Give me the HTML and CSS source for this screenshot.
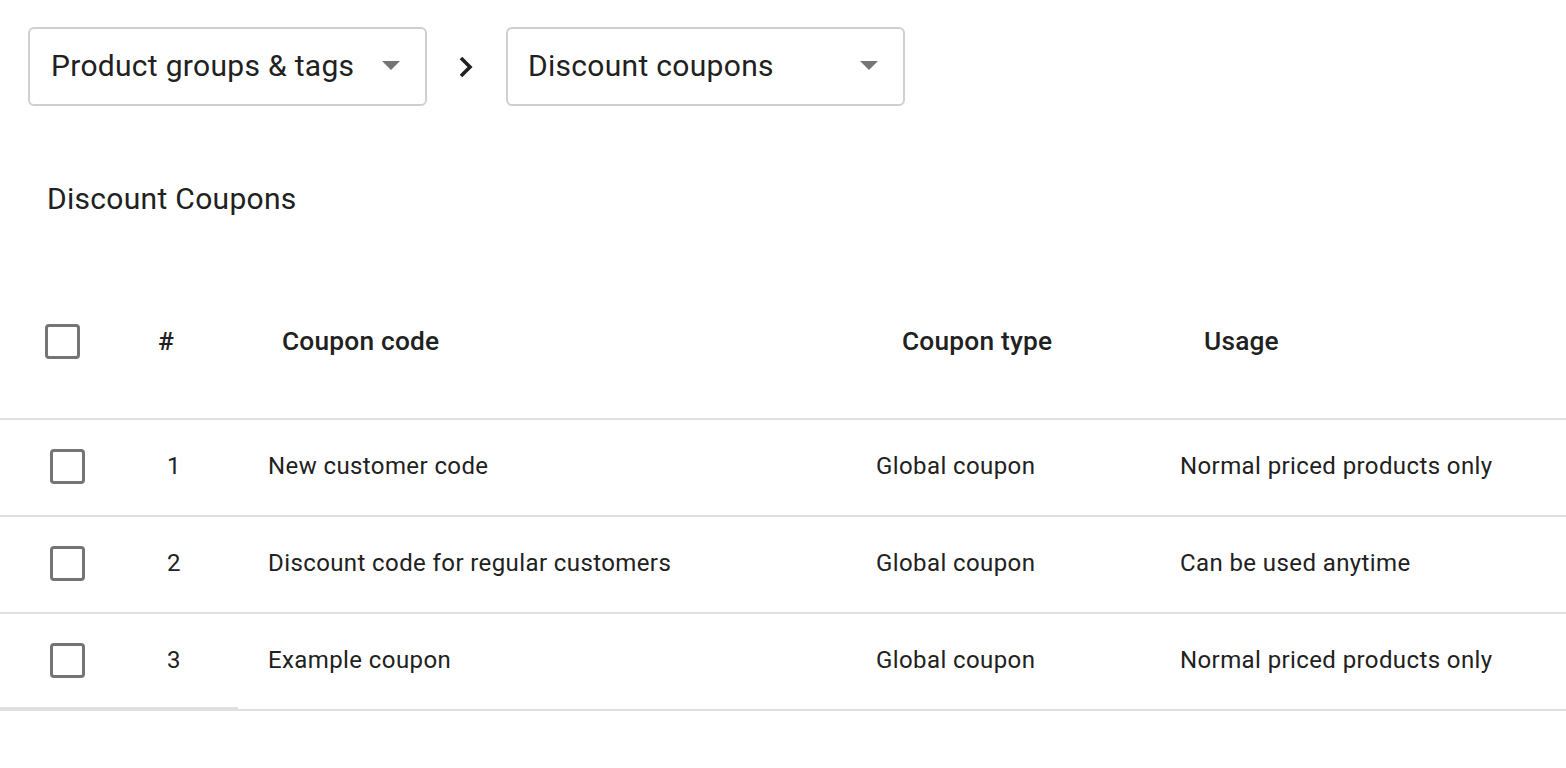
FILE: index.html
```html
<!DOCTYPE html>
<html>
<head>
<meta charset="utf-8">
<link rel="stylesheet" href="styles.css">
</head>
<body>
<div class="page">
  <div class="crumbs">
    <div class="select">
      <span class="select-label">Product groups &amp; tags</span>
      <span class="caret"></span>
    </div>
    <svg class="chev" width="16" height="24" viewBox="0 0 16 24"><path d="M3 3 L12 12 L3 21" fill="none" stroke="#212121" stroke-width="3.6"/></svg>
    <div class="select">
      <span class="select-label">Discount coupons</span>
      <span class="caret"></span>
    </div>
  </div>

  <h2 class="title">Discount Coupons</h2>

  <div class="table">
    <div class="thead">
      <div class="cell"><span class="box"></span></div>
      <div class="cell">#</div>
      <div class="cell">Coupon code</div>
      <div class="cell">Coupon type</div>
      <div class="cell">Usage</div>
    </div>
    <div class="tbody">
      <div class="row">
        <div class="cell"><span class="box"></span></div>
        <div class="cell num">1</div>
        <div class="cell">New customer code</div>
        <div class="cell">Global coupon</div>
        <div class="cell">Normal priced products only</div>
      </div>
      <div class="row">
        <div class="cell"><span class="box"></span></div>
        <div class="cell num">2</div>
        <div class="cell">Discount code for regular customers</div>
        <div class="cell">Global coupon</div>
        <div class="cell">Can be used anytime</div>
      </div>
      <div class="row">
        <div class="cell"><span class="box"></span></div>
        <div class="cell num">3</div>
        <div class="cell">Example coupon</div>
        <div class="cell">Global coupon</div>
        <div class="cell">Normal priced products only</div>
      </div>
      <div class="scroll-thumb"></div>
    </div>
  </div>
</div>
</body>
</html>
```

FILE: styles.css
```css
html, body {
  margin: 0;
  padding: 0;
  background: #ffffff;
}
body {
  font-family: Roboto, "Liberation Sans", sans-serif;
  color: #212121;
}
.page {
  padding-top: 27px;
}
.crumbs {
  display: flex;
  align-items: center;
  padding-left: 28px;
}
.select {
  box-sizing: border-box;
  width: 399px;
  height: 79px;
  border: 2px solid #cfcfcf;
  border-radius: 6px;
  display: flex;
  align-items: center;
  justify-content: space-between;
  padding: 0 25px 2px 21px;
}
.select-label {
  font-size: 30px;
  letter-spacing: 0.3px;
  color: #212121;
}
.caret {
  width: 0;
  height: 0;
  border-left: 9px solid transparent;
  border-right: 9px solid transparent;
  border-top: 9px solid #757575;
}
.chev {
  margin: 0 32px 0 31px;
}
.select + .chev + .select {
  padding-left: 20px;
}
.title {
  margin: 76px 0 0 47px;
  font-size: 30px;
  font-weight: 400;
  letter-spacing: 0.3px;
  line-height: 34px;
}
.table {
  margin-top: 91px;
}
.thead {
  display: grid;
  grid-template-columns: 113px 124px 620px 302px 1fr;
  height: 113px;
  align-items: center;
  border-bottom: 2px solid #e0e0e0;
  font-size: 26.3px;
  font-weight: 500;
  letter-spacing: 0.2px;
  padding-left: 45px;
  padding-bottom: 43px;
  box-sizing: border-box;
}
.tbody {
  position: relative;
}
.row {
  display: grid;
  grid-template-columns: 102px 116px 608px 304px 1fr;
  height: 97px;
  align-items: center;
  border-bottom: 2px solid #e0e0e0;
  font-size: 24px;
  letter-spacing: 0.4px;
  padding-left: 50px;
  padding-bottom: 3px;
  box-sizing: border-box;
}
.num {
  box-sizing: border-box;
  text-align: center;
  padding-right: 72px;
}
.cell {
  white-space: nowrap;
}
.box {
  display: block;
  box-sizing: border-box;
  width: 35px;
  height: 35px;
  border: 3.5px solid #757575;
  border-radius: 4px;
}
.scroll-thumb {
  position: absolute;
  left: 0;
  bottom: 0;
  width: 238px;
  height: 4px;
  background: #e0e0e0;
}
```
